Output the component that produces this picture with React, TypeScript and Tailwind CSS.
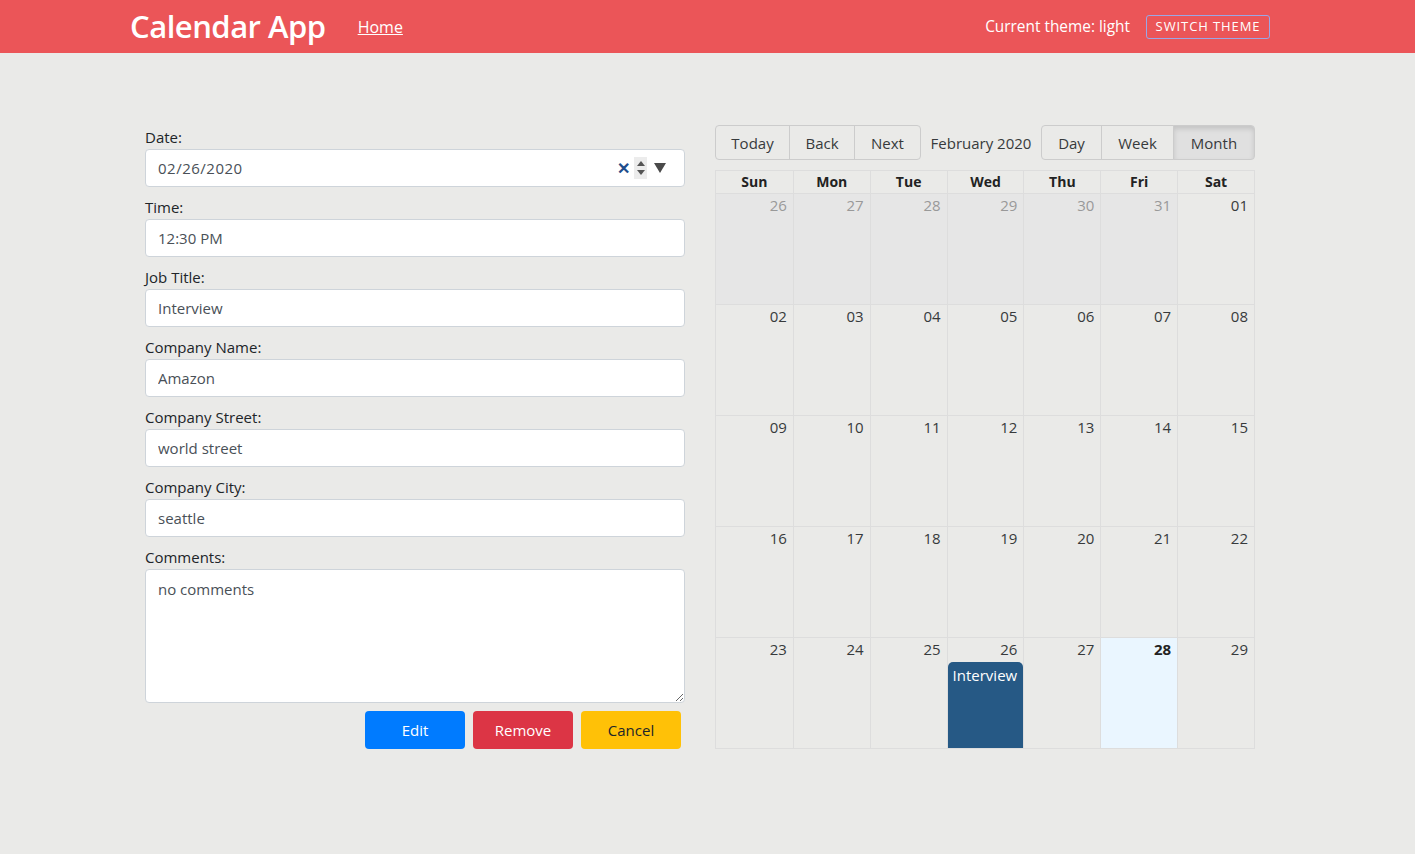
import { useState } from 'react';

type Cell = { day: string; off?: boolean; today?: boolean; event?: string };

const weeks: Cell[][] = [
  [
    { day: '26', off: true },
    { day: '27', off: true },
    { day: '28', off: true },
    { day: '29', off: true },
    { day: '30', off: true },
    { day: '31', off: true },
    { day: '01' },
  ],
  ['02', '03', '04', '05', '06', '07', '08'].map((day) => ({ day })),
  ['09', '10', '11', '12', '13', '14', '15'].map((day) => ({ day })),
  ['16', '17', '18', '19', '20', '21', '22'].map((day) => ({ day })),
  [
    { day: '23' },
    { day: '24' },
    { day: '25' },
    { day: '26', event: 'Interview' },
    { day: '27' },
    { day: '28', today: true },
    { day: '29' },
  ],
];

const dayNames = ['Sun', 'Mon', 'Tue', 'Wed', 'Thu', 'Fri', 'Sat'];

const body = { fontFamily: '"Open Sans", "Noto Sans", sans-serif' };

function Field({ label, value }: { label: string; value: string }) {
  return (
    <div className="mb-2">
      <label className="block h-6 leading-6 text-[15px] text-[#212529]">{label}</label>
      <input
        readOnly
        value={value}
        className="w-full h-[38px] px-3 bg-white border border-[#ced4da] rounded text-[15px] text-[#495057] outline-none"
      />
    </div>
  );
}

function EventForm() {
  return (
    <div className="w-[540px] shrink-0">
      <div className="mb-2">
        <label className="block h-6 leading-6 text-[15px] text-[#212529]">Date:</label>
        <div className="flex items-center w-full h-[38px] pl-3 pr-[18px] bg-white border border-[#ced4da] rounded text-[15px] text-[#495057]">
          <span className="flex-1 tracking-[0.5px]">02/26/2020</span>
          <span className="text-[#1f4e8c] text-[16px] font-bold leading-none mr-[4px]">✕</span>
          <span className="flex flex-col items-center justify-center w-[13px] h-[22px] bg-[#ececec] text-[#555]">
            <svg width="8" height="6" viewBox="0 0 8 6"><path d="M4 0L8 5H0z" fill="#555" /></svg>
            <svg width="8" height="6" viewBox="0 0 8 6" className="mt-[2px]"><path d="M0 1h8L4 6z" fill="#555" /></svg>
          </span>
          <svg width="12" height="10" viewBox="0 0 12 10" className="ml-[7px]">
            <path d="M0 0h12L6 10z" fill="#4a4a4a" />
          </svg>
        </div>
      </div>
      <Field label="Time:" value="12:30 PM" />
      <Field label="Job Title:" value="Interview" />
      <Field label="Company Name:" value="Amazon" />
      <Field label="Company Street:" value="world street" />
      <Field label="Company City:" value="seattle" />
      <div className="mb-2">
        <label className="block h-6 leading-6 text-[15px] text-[#212529]">Comments:</label>
        <textarea
          readOnly
          value="no comments"
          className="block w-full h-[134px] px-3 py-[8px] bg-white border border-[#ced4da] rounded text-[15px] text-[#495057] outline-none"
        />
      </div>
      <div className="flex justify-end gap-2 pr-1">
        <button className="w-[100px] h-[38px] rounded bg-[#007bff] text-white text-[15px]">Edit</button>
        <button className="w-[100px] h-[38px] rounded bg-[#dc3545] text-white text-[15px]">Remove</button>
        <button className="w-[100px] h-[38px] rounded bg-[#ffc107] text-[#212529] text-[15px]">Cancel</button>
      </div>
    </div>
  );
}

function Calendar() {
  const [view, setView] = useState('Month');
  return (
    <div className="w-[540px] shrink-0 text-[#373a3c]">
      <div className="flex items-center h-[35px] mb-[10px]">
        <div className="flex h-full">
          {['Today', 'Back', 'Next'].map((b, i) => (
            <button
              key={b}
              className={
                'h-full border border-[#ccc] text-[15px] pt-[1px] ' +
                (i === 0 ? 'w-[75px] rounded-l ' : i === 1 ? 'w-[66px] -ml-px ' : 'w-[67px] -ml-px rounded-r ')
              }
            >
              {b}
            </button>
          ))}
        </div>
        <div className="flex-1 text-center text-[15px] pt-[1px]">February 2020</div>
        <div className="flex h-full">
          {['Day', 'Week', 'Month'].map((b, i) => (
            <button
              key={b}
              onClick={() => setView(b)}
              className={
                'h-full border border-[#ccc] text-[15px] pt-[1px] ' +
                (i === 0 ? 'w-[61px] rounded-l ' : i === 1 ? 'w-[73px] -ml-px ' : 'w-[82px] -ml-px rounded-r ') +
                (view === b ? 'bg-[#e0e0e0] border-[#adadad] shadow-[inset_0_3px_5px_rgba(0,0,0,0.125)]' : '')
              }
            >
              {b}
            </button>
          ))}
        </div>
      </div>

      <div className="flex flex-col h-[579px] border border-[#ddd]">
        <div className="grid grid-cols-7 h-[22px] shrink-0">
          {dayNames.map((d, i) => (
            <div
              key={d}
              className={'text-center text-[14px] font-bold leading-[21px] text-[#222] ' + (i > 0 ? 'border-l border-[#ddd]' : '')}
            >
              {d}
            </div>
          ))}
        </div>
        {weeks.map((week, r) => (
          <div key={r} className="grid grid-cols-7 flex-1 border-t border-[#ddd]">
            {week.map((c, i) => (
              <div
                key={i}
                className={
                  'relative flex flex-col ' +
                  (i > 0 ? 'border-l border-[#ddd] ' : '') +
                  (c.off ? 'bg-[#e6e6e6] ' : '') +
                  (c.today ? 'bg-[#eaf6ff] ' : '')
                }
              >
                <div
                  className={
                    'text-right pr-[6px] pt-[1px] text-[15px] leading-5 ' +
                    (c.off ? 'text-[#999]' : c.today ? 'font-bold text-[#222]' : 'text-[#373a3c]')
                  }
                >
                  {c.day}
                </div>
                {c.event && (
                  <div className="flex-1 mt-[3px] bg-[#265985] text-white text-[15px] rounded-t-[5px] px-[5px] pt-[2px]">
                    {c.event}
                  </div>
                )}
              </div>
            ))}
          </div>
        ))}
      </div>
    </div>
  );
}

export default function App() {
  return (
    <div className="min-h-[854px] bg-[#eaeae8]" style={body}>
      <header className="flex items-center h-[53px] bg-[#eb5558] pl-[130px] pr-[145px] text-white">
        <h1 className="text-[31px] font-semibold tracking-[-0.5px]">Calendar App</h1>
        <a href="#" className="ml-8 text-[16px] underline">Home</a>
        <div className="flex-1" />
        <span className="text-[15.4px]">Current theme: light</span>
        <button className="ml-4 h-[24px] w-[124px] border border-[#9aa7e6] rounded-[3px] text-[13px] tracking-[0.9px] uppercase">
          Switch theme
        </button>
      </header>

      <main className="flex gap-[30px] pl-[145px] pt-[72px]">
        <EventForm />
        <Calendar />
      </main>
    </div>
  );
}
